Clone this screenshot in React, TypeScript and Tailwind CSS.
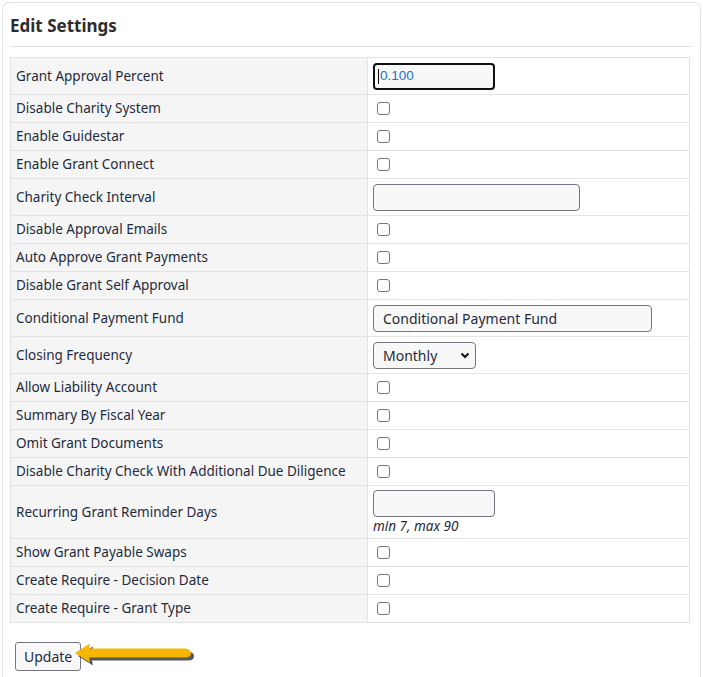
import React from 'react';

type Row =
  | { label: string; kind: 'check' }
  | { label: string; kind: 'text'; width: string; value?: string; focused?: boolean; hint?: string }
  | { label: string; kind: 'select' };

const rows: Row[] = [
  { label: 'Grant Approval Percent', kind: 'text', width: 'w-[122px]', value: '0.100', focused: true },
  { label: 'Disable Charity System', kind: 'check' },
  { label: 'Enable Guidestar', kind: 'check' },
  { label: 'Enable Grant Connect', kind: 'check' },
  { label: 'Charity Check Interval', kind: 'text', width: 'w-[207px]' },
  { label: 'Disable Approval Emails', kind: 'check' },
  { label: 'Auto Approve Grant Payments', kind: 'check' },
  { label: 'Disable Grant Self Approval', kind: 'check' },
  { label: 'Conditional Payment Fund', kind: 'text', width: 'w-[279px]', value: 'Conditional Payment Fund' },
  { label: 'Closing Frequency', kind: 'select' },
  { label: 'Allow Liability Account', kind: 'check' },
  { label: 'Summary By Fiscal Year', kind: 'check' },
  { label: 'Omit Grant Documents', kind: 'check' },
  { label: 'Disable Charity Check With Additional Due Diligence', kind: 'check' },
  { label: 'Recurring Grant Reminder Days', kind: 'text', width: 'w-[122px]', hint: 'min 7, max 90' },
  { label: 'Show Grant Payable Swaps', kind: 'check' },
  { label: 'Create Require - Decision Date', kind: 'check' },
  { label: 'Create Require - Grant Type', kind: 'check' },
];

function Checkbox() {
  return <span className="block w-[13px] h-[13px] ml-[4px] border border-[#767676] rounded-[3px] bg-white" />;
}

function Field({ row }: { row: Extract<Row, { kind: 'text' }> }) {
  return (
    <div>
      <div
        className={`${row.width} h-[27px] rounded-[4px] bg-[#f8f8f8] flex items-center ${
          row.focused ? 'border-2 border-[#101010] pl-[3px]' : 'border border-[#767480] pl-[9px]'
        }`}
      >
        {row.focused ? (
          <span className="flex items-center text-[13.5px] text-[#1a73c8] font-['Liberation_Sans',sans-serif]">
            <span className="w-px h-[15px] bg-black mr-px" />
            {row.value}
          </span>
        ) : (
          <span className="text-[14px] text-[#1f2b3d]">{row.value}</span>
        )}
      </div>
      {row.hint && <div className="text-[13.5px] italic text-[#1f2b3d] leading-[16px] mt-[1px]">{row.hint}</div>}
    </div>
  );
}

function Select() {
  return (
    <div className="relative w-[103px] h-[27px] rounded-[4px] border border-[#767480] bg-[#f8f8f8] flex items-center pl-[9px] text-[14px] text-[#1f2b3d]">
      Monthly
      <svg className="absolute right-[5px] top-[9px]" width="10" height="7" viewBox="0 0 10 7">
        <path d="M1.5 1.5 L5 5 L8.5 1.5" fill="none" stroke="#111" strokeWidth="2" />
      </svg>
    </div>
  );
}

function UpdateArrow() {
  return (
    <svg width="124" height="28" viewBox="0 0 124 28" className="ml-[-7px] mt-[2px]">
      <path
        d="M2 11 L17 1.5 L16 6.5 L112 6.5 Q118 7 118 11 Q118 15.5 112 15.5 L16 15.5 L17 20.5 Z"
        fill="#2e2e2e"
        opacity="0.8"
        transform="translate(2,2)"
      />
      <path
        d="M1 10 L16 0.5 L15 5.5 L111 5.5 Q117 6 117 10 Q117 14.5 111 14.5 L15 14.5 L16 19.5 Z"
        fill="#f6b600"
      />
    </svg>
  );
}

export default function App() {
  return (
    <div className="min-h-[677px] bg-white pt-[2px] px-[2px] font-['Noto_Sans',sans-serif]">
      <div className="border border-[#dfe3ea] border-b-0 rounded-t-[7px] min-h-[675px] px-[7px]">
        <h2 className="text-[17px] font-bold text-[#2d2d2d] leading-[24px] pt-[11px] pb-[8px] border-b border-[#dfe3ea]">
          Edit Settings
        </h2>
        <table className="mt-[10px] w-[680px] border-collapse text-[13.5px] text-[#1f2b3d]">
          <tbody>
            {rows.map((r) => (
              <tr key={r.label}>
                <td
                  className={`w-[357px] bg-[#f5f5f5] border border-[#e3e3e3] pl-[5px] pr-[4px] py-0 whitespace-nowrap ${
                    r.kind === 'check' ? 'h-[28px]' : r.kind === 'text' && r.hint ? 'h-[53px]' : 'h-[37px]'
                  }`}
                >
                  {r.label}
                </td>
                <td className="bg-white border border-[#e3e3e3] px-[5px] py-0">
                  {r.kind === 'check' && <Checkbox />}
                  {r.kind === 'text' && <Field row={r} />}
                  {r.kind === 'select' && <Select />}
                </td>
              </tr>
            ))}
          </tbody>
        </table>
        <div className="flex items-center mt-[18px]">
          <button className="h-[29px] px-[8px] ml-[5px] border border-[#767480] rounded-[3px] bg-[#f8f8f8] text-[14px] text-[#1f2b3d]">
            Update
          </button>
          <UpdateArrow />
        </div>
      </div>
    </div>
  );
}
